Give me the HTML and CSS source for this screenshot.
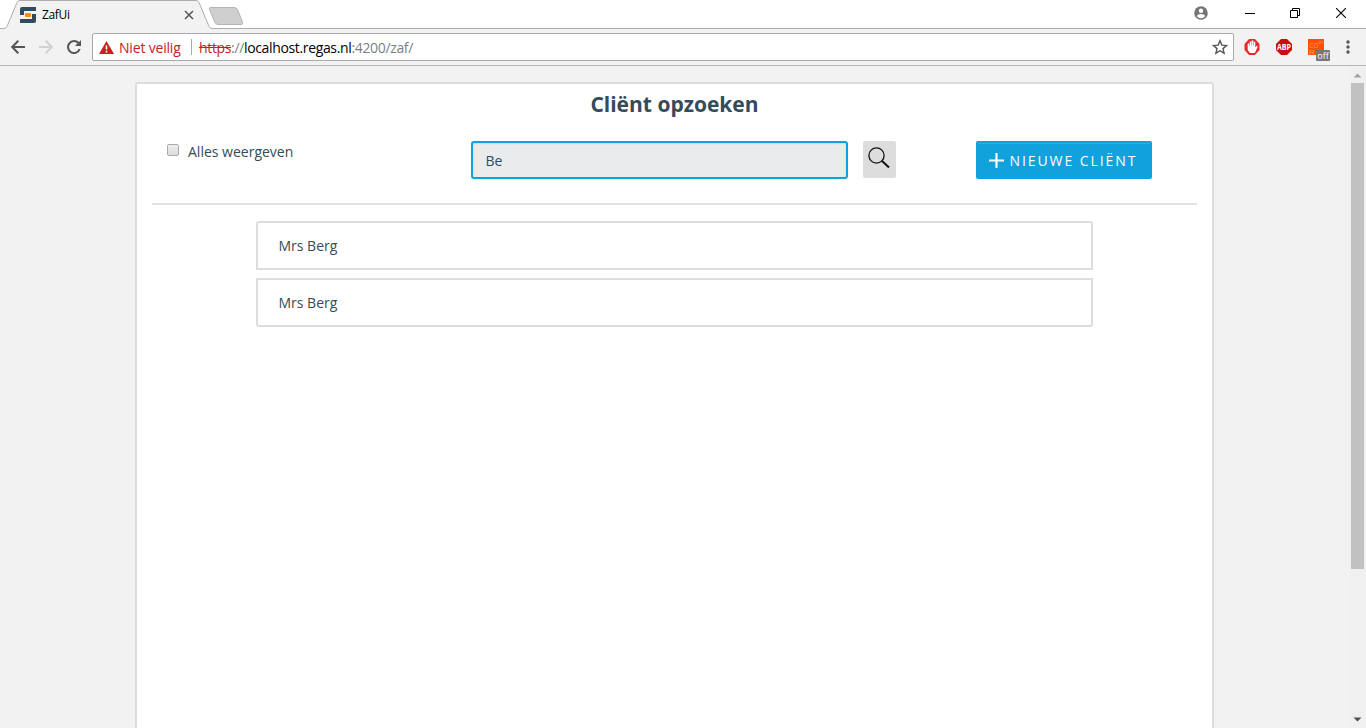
FILE: index.html
```html
<!DOCTYPE html>
<html lang="nl">
<head>
<meta charset="utf-8">
<title>ZafUi</title>
<link rel="stylesheet" href="styles.css">
</head>
<body>
<div class="browser">
  <header class="titlebar">
    <div class="tab">
      <svg class="tab-shape" width="250" height="29" viewBox="0 0 250 29">
        <path d="M0 28.5H4Q6 28.5 7 26.500L17 2.500Q18 .5 20 .5H196Q198 .5 199 2.500L209 26.500Q210 28.500 212 28.500H250V29H0Z" fill="#f2f2f2"/>
        <path d="M0 28.500H4Q6 28.500 7 26.500L17 2.500Q18 .5 20 .5H196Q198 .5 199 2.500L209 26.500Q210 28.500 212 28.500H250" fill="none" stroke="#adadad"/>
        <path d="M211 7.500H234Q236.500 7.500 237.500 9.500L242.500 22Q243.500 24.500 241 24.500H218Q216 24.500 215 22.500L209.500 9.500Q208.500 7.500 211 7.500Z" fill="#cfcfcf" stroke="#b4b4b4"/>
      </svg>
      <svg class="favicon" width="16" height="16" viewBox="0 0 16 16">
        <path d="M2 0H16V4H4V8H0V2Q0 0 2 0Z" fill="#354a58"/>
        <path d="M16 7V14Q16 16 14 16H0V12H12V7Z" fill="#354a58"/>
        <rect x="5" y="6" width="6" height="4" rx="1" fill="#ff8b0f"/>
      </svg>
      <span class="tab-title">ZafUi</span>
      <svg class="tab-close" width="10" height="10" viewBox="0 0 10 10"><path d="M1 1L9 9M9 1L1 9" stroke="#5a5a5a" stroke-width="1.600"/></svg>
    </div>
    <div class="window-buttons">
      <svg width="14" height="14" viewBox="0 0 14 14"><circle cx="7" cy="7" r="6.800" fill="#757575"/><circle cx="7" cy="4.700" r="2.200" fill="#fff"/><path d="M2.700 10Q4 8 7 8T11.300 10Q9.500 12.300 7 12.300T2.700 10Z" fill="#fff"/></svg>
      <svg width="10" height="10" viewBox="0 0 10 10"><path d="M0 5.500H10" stroke="#000"/></svg>
      <svg width="10" height="10" viewBox="0 0 10 10"><path d="M.5 2.500H7.500V9.500H.5ZM2.500 2.500V.5H9.500V7.500H7.500" fill="none" stroke="#000"/></svg>
      <svg width="10" height="10" viewBox="0 0 10 10"><path d="M0 0L10 10M10 0L0 10" stroke="#000" stroke-width="1.100"/></svg>
    </div>
  </header>
  <div class="toolbar">
    <div class="nav">
      <svg width="14" height="14" viewBox="0 0 14 14"><path d="M14 7H1.500M7.300 .8L1.200 7L7.300 13.200" fill="none" stroke="#555" stroke-width="2"/></svg>
      <svg width="14" height="14" viewBox="0 0 14 14"><path d="M0 7H12.500M6.700 .8L12.800 7L6.700 13.200" fill="none" stroke="#d1d1d1" stroke-width="2"/></svg>
      <svg width="14" height="14" viewBox="0 0 14 14"><path d="M12.700 9A6 6 0 1 1 11.500 3" fill="none" stroke="#555" stroke-width="2"/><path d="M14 0V6H8Z" fill="#555"/></svg>
    </div>
    <div class="address">
      <svg class="warn" width="15" height="13" viewBox="0 0 15 13"><path d="M7.500 0L15 13H0Z" fill="#c5221f"/><path d="M7.500 4.500V8.500M7.500 9.800V11.400" stroke="#fff" stroke-width="1.600"/></svg>
      <span class="unsafe">Niet veilig</span>
      <span class="divider"></span>
      <span class="url"><s>https</s>://<b>localhost.regas.nl</b>:4200/zaf/</span>
      <svg class="star" width="16" height="16" viewBox="0 0 16 16"><path d="M8 1.700L9.900 6.100L14.600 6.500L11 9.600L12.100 14.200L8 11.700L3.900 14.200L5 9.600L1.400 6.500L6.100 6.100Z" fill="none" stroke="#555" stroke-width="1.400"/></svg>
    </div>
    <div class="extensions">
      <svg width="16" height="16" viewBox="0 0 16 16"><path d="M5 0H11L15.500 5V11L11 16H5L.5 11V5Z" fill="#e52b2b"/><path d="M3.700 8V4.500H5.300V7H5.700V2.500H7.300V6.500H7.700V1.500H9.300V6.500H9.800V2.800H11.300V8.500L12.700 6.800L13.700 7.700L10.800 14H6L3.700 11Z" fill="#fff"/></svg>
      <svg width="16" height="16" viewBox="0 0 16 16"><path d="M5 0H11L16 5V11L11 16H5L0 11V5Z" fill="#c70d0d"/><text x="8" y="11" text-anchor="middle" textLength="14" lengthAdjust="spacingAndGlyphs" class="abp">ABP</text></svg>
      <svg width="22" height="23" viewBox="0 0 22 23"><rect width="16" height="16" fill="#ff4f00"/><g class="cors"><text x="1" y="9" textLength="9.500" lengthAdjust="spacingAndGlyphs">CO</text><text x="1" y="16">R</text><text x="10.500" y="4.500" class="cors-m">m</text></g><rect x="8" y="11" width="14" height="11" rx="1" fill="#777"/><text x="15" y="19.500" text-anchor="middle" class="off">off</text></svg>
      <svg width="4" height="14" viewBox="0 0 4 14"><circle cx="2" cy="2" r="1.700" fill="#555"/><circle cx="2" cy="7" r="1.700" fill="#555"/><circle cx="2" cy="12" r="1.700" fill="#555"/></svg>
    </div>
  </div>
  <div class="viewport">
    <main class="page">
      <section class="card">
        <h1>Cliënt opzoeken</h1>
        <div class="search-row">
          <label class="show-all"><span class="checkbox"></span>Alles weergeven</label>
          <div class="search-input">Be</div>
          <button class="search-button"><svg width="22" height="22" viewBox="0 0 22 22"><circle cx="8.500" cy="8.500" r="7.600" fill="none" stroke="#111" stroke-width="1.300"/><path d="M13.800 13.800L21 20.500" stroke="#111" stroke-width="2"/></svg></button>
          <button class="new-client"><svg width="15" height="15" viewBox="0 0 15 15"><path d="M7.500 .7V14.300M.7 7.500H14.300" stroke="#fff" stroke-width="2.200" stroke-linecap="round"/></svg><span>NIEUWE CLIËNT</span></button>
        </div>
        <div class="results">
          <div class="result">Mrs Berg</div>
          <div class="result">Mrs Berg</div>
        </div>
      </section>
    </main>
    <div class="scrollbar">
      <svg width="9" height="5" viewBox="0 0 9 5"><path d="M.5 4.500L4.500 .5L8.500 4.500Z" fill="#a3a3a3"/></svg>
      <div class="thumb"></div>
      <svg class="down" width="9" height="5" viewBox="0 0 9 5"><path d="M.5 .5H8.500L4.500 4.500Z" fill="#505050"/></svg>
    </div>
  </div>
</div>
</body>
</html>
```
FILE: styles.css
```css
* { box-sizing: border-box; }
body { margin: 0; font-family: "Open Sans", "Noto Sans", sans-serif; color: #344b5b; overflow: hidden; }
svg { display: block; flex: none; }
button { border: 0; margin: 0; font: inherit; }
.browser { width: 1366px; height: 728px; display: flex; flex-direction: column; }

.titlebar { height: 29px; display: flex; justify-content: space-between; background: linear-gradient(#adadad, #adadad) 0 28px / 100% 1px no-repeat #fff; }
.tab { position: relative; width: 250px; height: 29px; display: flex; align-items: center; padding-left: 20px; }
.tab-shape { position: absolute; left: 0; top: 0; }
.favicon { position: relative; margin-top: 1px; }
.tab-title { position: relative; margin-left: 6px; width: 142px; font-size: 12px; line-height: 16px; letter-spacing: -.35px; color: #000; }
.tab-close { position: relative; margin-top: 1px; }
.window-buttons { display: flex; align-items: center; gap: 35px; padding: 0 20px 3px 0; }
.window-buttons svg:first-child { margin-right: 2px; }
.window-buttons svg:last-child { margin-left: 1px; }

.toolbar { height: 37px; display: flex; align-items: center; background: #f2f2f2; border-bottom: 1px solid #b6b6b6; }
.nav { width: 92px; display: flex; gap: 14px; padding-left: 11px; }
.address { width: 1142px; height: 28px; display: flex; align-items: center; background: #fff; border: 1px solid #a9a9a9; border-radius: 2px; padding: 0 5px 0 6px; font-size: 14px; }
.warn { margin-right: 5px; }
.unsafe { width: 72px; color: #c5221f; letter-spacing: -.18px; white-space: nowrap; }
.divider { width: 1px; height: 16px; margin-right: 7px; background: #a9a9a9; }
.url { color: #808080; letter-spacing: -.35px; }
.url s { color: #c5221f; }
.url b { color: #000; font-weight: 400; }
.star { margin-left: auto; }
.extensions { height: 16px; display: flex; gap: 16px; padding-left: 10px; }
.extensions svg:last-child { margin: 1px 0 0 0; }
.abp { font: bold 8.500px "Open Sans", sans-serif; fill: #fff; }
.cors { font: 8px "Liberation Sans", sans-serif; fill: #ff9668; }
.cors-m { font-size: 5.500px; }
.off { font: 9px "Open Sans", sans-serif; fill: #fff; }

.viewport { height: 662px; display: flex; background: #f2f2f2; }
.page { flex: 1; padding: 16px 0 0 135px; overflow: hidden; }
.card { width: 1079px; height: 700px; background: #fff; border: 2px solid #ddd; border-radius: 3px; padding: 0 15px; }
h1 { height: 57px; margin: 0; padding-top: 6px; text-align: center; font-size: 21px; line-height: 28px; font-weight: 700; }
.search-row { height: 64px; display: flex; align-items: flex-start; border-bottom: 2px solid #e2e2e2; }
.show-all { width: 319px; display: flex; padding: 0 0 0 15px; font-size: 14px; line-height: 22px; }
.checkbox { width: 12px; height: 12px; margin: 3px 9px 0 0; border: 1px solid #a9a9a9; border-radius: 2px; background: linear-gradient(#eee, #dcdcdc); }
.search-input { width: 377px; height: 38px; border: 2px solid #11a1dd; border-radius: 3px; background: #eaebed; box-shadow: inset 0 1px 2px rgba(0,0,0,.1); padding: 0 12.500px; font-size: 14px; line-height: 36px; }
.search-button { width: 33px; height: 37px; margin-left: 15px; padding: 4px 5px 7px; background: #ddd; border-radius: 2px; }
.new-client { width: 176px; height: 38px; margin-left: 80px; display: flex; align-items: center; gap: 5.500px; padding: 0 0 0 13px; background: linear-gradient(#31ade1, #31ade1) 2px 2px / 172px 1px no-repeat #11a1dd; border-radius: 2px; color: #fff; font-size: 14px; letter-spacing: 1.920px; white-space: nowrap; }
.results { display: flex; flex-direction: column; gap: 8px; padding: 16px 104px 0; }
.result { height: 49px; border: 2px solid #ddd; padding-left: 20.500px; font-size: 14px; line-height: 46px; }
.result:first-child { border-radius: 3px 3px 0 0; }
.result:last-child { border-radius: 0 0 3px 3px; }
.scrollbar { width: 17px; display: flex; flex-direction: column; align-items: center; background: #f0f0f0; padding: 7px 2px 6px; }
.thumb { width: 13px; height: 486px; margin-top: 5px; background: #c1c1c1; }
.down { margin-top: auto; }
```
